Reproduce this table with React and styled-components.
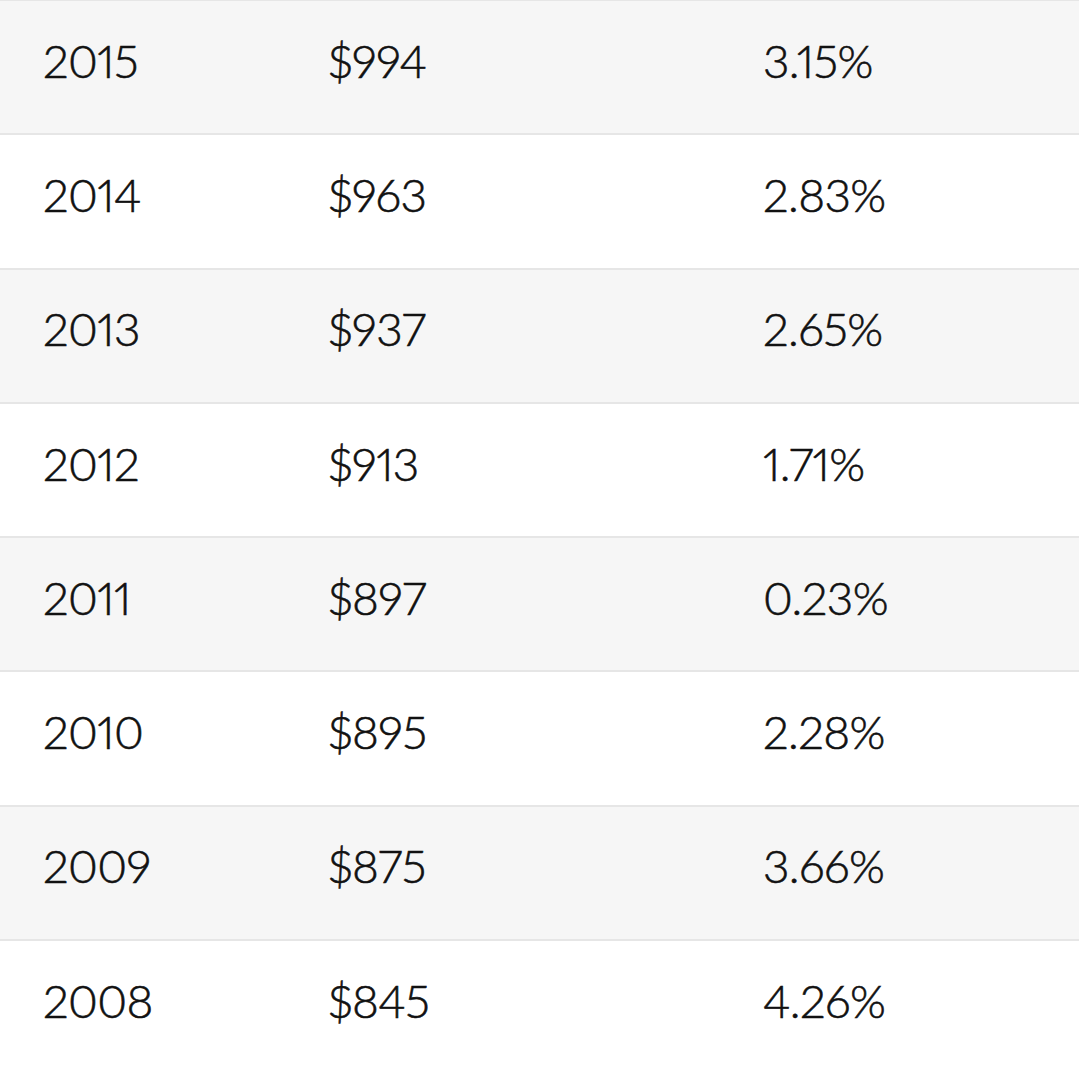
import React from 'react';
import styled, { createGlobalStyle } from 'styled-components';

const GlobalStyle = createGlobalStyle`
  html, body {
    margin: 0;
    padding: 0;
    background: #ffffff;
  }
  body {
    font-family: Lato, 'Liberation Sans', sans-serif;
    color: #111111;
    overflow: hidden;
  }
`;

const Table = styled.div`
  display: flex;
  flex-direction: column;
  margin-top: -1px;
`;

const Row = styled.div`
  display: grid;
  grid-template-columns: 285px 435px 1fr;
  align-items: center;
  box-sizing: border-box;
  height: 134.3px;
  padding: 0 0 13px 43px;
  border-top: 2px solid #e6e6e6;
  background: ${(p) => (p.$shaded ? '#f6f6f6' : '#ffffff')};
`;

const Cell = styled.div`
  font-size: 46px;
  font-weight: 300;
  line-height: 1;
  letter-spacing: -0.6px;
  font-variant-numeric: proportional-nums;
  -webkit-text-stroke: 0.6px #111111;
`;

const rows = [
  ['2015', '$994', '3.15%'],
  ['2014', '$963', '2.83%'],
  ['2013', '$937', '2.65%'],
  ['2012', '$913', '1.71%'],
  ['2011', '$897', '0.23%'],
  ['2010', '$895', '2.28%'],
  ['2009', '$875', '3.66%'],
  ['2008', '$845', '4.26%'],
];

const App = () => (
  <>
    <GlobalStyle />
    <Table>
      {rows.map((r, i) => (
        <Row key={r[0]} $shaded={i % 2 === 0}>
          <Cell>{r[0]}</Cell>
          <Cell>{r[1]}</Cell>
          <Cell>{r[2]}</Cell>
        </Row>
      ))}
    </Table>
  </>
);

export default App;
